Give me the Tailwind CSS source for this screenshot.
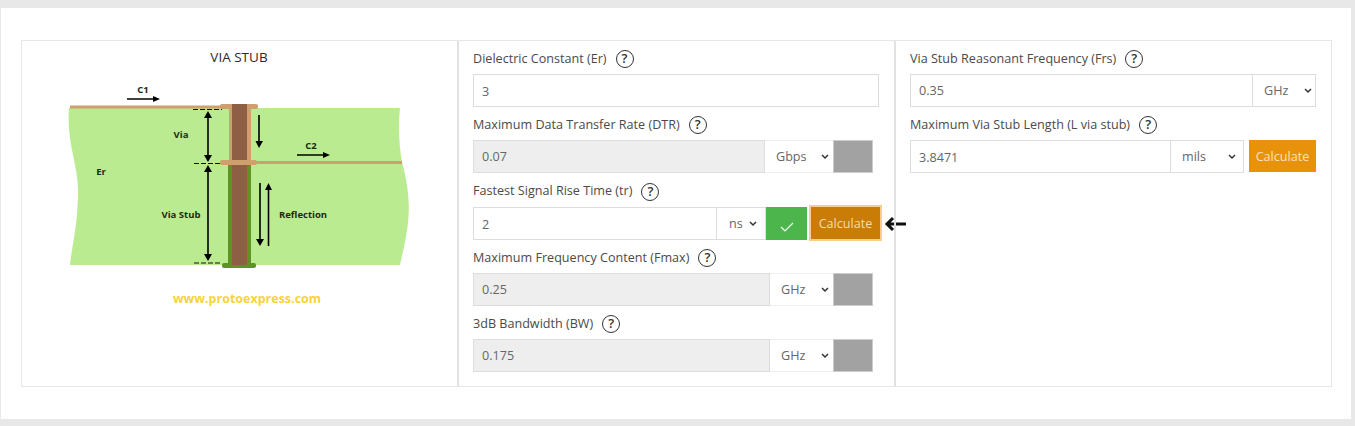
<!DOCTYPE html>
<html lang="en">
	<head>
		<meta charset="UTF-8" />
		<meta name="viewport" content="width=device-width, initial-scale=1.0" />
		<title>Via Stub Calculator</title>
		<script src="https://cdn.jsdelivr.net/npm/@tailwindcss/browser@4"></script>
	</head>
	<body class="bg-[#e8e8e8] h-[426px] overflow-hidden font-['Open_Sans',sans-serif] text-[12.6px] text-[#4a4a4a]">
		<div class="ml-px mr-[4px] mt-2 h-[411px] bg-white pt-8 pl-5">
			<div class="grid grid-cols-[435px_437px_437px] w-[1311px] h-[347px] border border-[#e6e6e6]">
				<!-- diagram -->
				<div>
					<svg class="block" width="435" height="345" viewBox="22 41 435 345" font-family="Open Sans, sans-serif">
						<text x="239" y="62" text-anchor="middle" font-size="13.5" fill="#2a2a2a">VIA STUB</text>
						<path d="M69 108H400C398 125 399 145 402 162C408 185 411 205 407 230C405 245 402 255 400 265H70C72 245 78 225 78 190C78 165 66 140 69 108Z" fill="#bbeb91" />
						<rect x="70" y="105.5" width="155" height="3" fill="#cf9f6e" />
						<rect x="228" y="163" width="23" height="102" fill="#5f9323" />
						<rect x="222" y="263" width="34" height="5" rx="2" fill="#5f9323" />
						<rect x="229" y="104" width="22" height="60" fill="#cf9f6e" />
						<rect x="220" y="104" width="38" height="5" rx="2" fill="#cf9f6e" />
						<rect x="232" y="104" width="15" height="161" fill="#8e5f45" />
						<rect x="220" y="160" width="37" height="5" rx="2" fill="#cf9f6e" />
						<rect x="250" y="161" width="152" height="3" fill="#cf9f6e" />
						<g stroke="#111" stroke-width="1" stroke-dasharray="5 2" fill="none">
							<path d="M193 109.5H222M194 163.5H222M194 263H222" />
						</g>
						<g stroke="#000" stroke-width="1.6" fill="none">
							<path d="M208 116V157M208 171V256M259 115V142M260 183V240M268.5 189V246M127 99H154M297 155H324" />
						</g>
						<g fill="#000">
							<path d="M204 118L208 111L212 118ZM204 155L208 162L212 155ZM204 172L208 165L212 172ZM204 254L208 261L212 254ZM255.5 141L259 148L263 141ZM256 239L260 246L264 239ZM265 190L268.5 183L272 190ZM153 96L160 99L153 102ZM323 152L330 155L323 158Z" />
						</g>
						<g font-size="9.5" font-weight="700" fill="#1c2b10" text-anchor="middle">
							<text x="143" y="93">C1</text>
							<text x="311" y="149">C2</text>
							<text x="181" y="138">Via</text>
							<text x="101" y="175">Er</text>
							<text x="181" y="218">Via Stub</text>
							<text x="303" y="218">Reflection</text>
						</g>
						<text x="247" y="303" text-anchor="middle" font-size="12.5" font-weight="700" fill="#f8d33a">www.protoexpress.com</text>
					</svg>
				</div>

				<!-- inputs -->
				<div class="border-l-2 border-[#e2e2e2] pl-[14px]">
					<div class="flex items-center gap-[9px] h-[33px] pt-[3px]">
						<span>Dielectric Constant (Er)</span>
						<span class="flex items-center justify-center size-[18px] rounded-full border-[1.5px] border-[#333] text-[13px] font-semibold text-[#333]">?</span>
					</div>
					<input class="block w-[406px] h-[33px] border border-[#ddd] px-2 pt-px text-[#666] outline-none" value="3" />

					<div class="flex items-center gap-[9px] h-[33px] pt-[3px]">
						<span>Maximum Data Transfer Rate (DTR)</span>
						<span class="flex items-center justify-center size-[18px] rounded-full border-[1.5px] border-[#333] text-[13px] font-semibold text-[#333]">?</span>
					</div>
					<div class="flex h-[33px] w-[400px]">
						<input class="w-[292px] border border-[#ddd] bg-[#eeeeee] px-2 pt-px text-[#666] outline-none" value="0.07" disabled />
						<div class="relative w-[68px]">
							<select class="appearance-none w-full h-full bg-white border-y border-[#eee] pl-[11px] pt-0.5 text-[#666]"><option>Gbps</option></select>
							<svg class="absolute right-[4px] top-[14px]" width="8" height="6" viewBox="0 0 8 6" fill="none" stroke="#333" stroke-width="1.5"><path d="M1 1L4 4L7 1" /></svg>
						</div>
						<span class="w-10 bg-[#a2a2a2] border border-[#ccc]"></span>
					</div>

					<div class="flex items-center gap-[9px] h-[34px] pt-[3px]">
						<span>Fastest Signal Rise Time (tr)</span>
						<span class="flex items-center justify-center size-[18px] rounded-full border-[1.5px] border-[#333] text-[13px] font-semibold text-[#333]">?</span>
					</div>
					<div class="flex items-center h-[33px] w-[440px]">
						<input class="w-[244px] h-[33px] border border-[#ddd] px-2 pt-px text-[#666] outline-none" value="2" />
						<div class="relative w-[49px] h-[33px]">
							<select class="appearance-none w-full h-full bg-white border-y border-r border-[#ddd] pl-3 pt-0.5 text-[#666]"><option>ns</option></select>
							<svg class="absolute right-[9px] top-[14px]" width="8" height="6" viewBox="0 0 8 6" fill="none" stroke="#333" stroke-width="1.5"><path d="M1 1L4 4L7 1" /></svg>
						</div>
						<span class="flex items-center justify-center w-[41px] h-[33px] bg-[#4cb64c]">
							<svg width="14" height="10" viewBox="0 0 14 10" fill="none" stroke="#fff" stroke-width="1.2" class="mt-1.5"><path d="M1 5L5 9L13 1" /></svg>
						</span>
						<button class="ml-1 -mt-[2px] w-[69px] h-[32px] pt-[3px] bg-[#c97c06] text-[#f6dca8] ring-2 ring-[#f5cf8d]">Calculate</button>
						<svg class="ml-1" width="22" height="16" viewBox="0 0 22 16" fill="none" stroke="#111" stroke-width="3"><path d="M22 8H3M9 2L3 8L9 14" /></svg>
					</div>

					<div class="flex items-center gap-[9px] h-[33px] pt-[3px]">
						<span>Maximum Frequency Content (Fmax)</span>
						<span class="flex items-center justify-center size-[18px] rounded-full border-[1.5px] border-[#333] text-[13px] font-semibold text-[#333]">?</span>
					</div>
					<div class="flex h-[33px] w-[400px]">
						<input class="w-[297px] border border-[#ddd] bg-[#eeeeee] px-2 pt-px text-[#666] outline-none" value="0.25" disabled />
						<div class="relative w-[63px]">
							<select class="appearance-none w-full h-full bg-white border-y border-[#eee] pl-[11px] pt-0.5 text-[#666]"><option>GHz</option></select>
							<svg class="absolute right-[4px] top-[14px]" width="8" height="6" viewBox="0 0 8 6" fill="none" stroke="#333" stroke-width="1.5"><path d="M1 1L4 4L7 1" /></svg>
						</div>
						<span class="w-10 bg-[#a2a2a2] border border-[#ccc]"></span>
					</div>

					<div class="flex items-center gap-[9px] h-[33px] pt-[3px]">
						<span>3dB Bandwidth (BW)</span>
						<span class="flex items-center justify-center size-[18px] rounded-full border-[1.5px] border-[#333] text-[13px] font-semibold text-[#333]">?</span>
					</div>
					<div class="flex h-[33px] w-[400px]">
						<input class="w-[297px] border border-[#ddd] bg-[#eeeeee] px-2 pt-px text-[#666] outline-none" value="0.175" disabled />
						<div class="relative w-[63px]">
							<select class="appearance-none w-full h-full bg-white border-y border-[#eee] pl-[11px] pt-0.5 text-[#666]"><option>GHz</option></select>
							<svg class="absolute right-[4px] top-[14px]" width="8" height="6" viewBox="0 0 8 6" fill="none" stroke="#333" stroke-width="1.5"><path d="M1 1L4 4L7 1" /></svg>
						</div>
						<span class="w-10 bg-[#a2a2a2] border border-[#ccc]"></span>
					</div>
				</div>

				<!-- results -->
				<div class="border-l-2 border-[#e2e2e2] pl-[14px]">
					<div class="flex items-center gap-[9px] h-[33px] pt-[3px]">
						<span>Via Stub Reasonant Frequency (Frs)</span>
						<span class="flex items-center justify-center size-[18px] rounded-full border-[1.5px] border-[#333] text-[13px] font-semibold text-[#333]">?</span>
					</div>
					<div class="flex h-[33px] w-[406px]">
						<input class="w-[343px] border border-[#ddd] px-2 pt-px text-[#666] outline-none" value="0.35" />
						<div class="relative w-[63px]">
							<select class="appearance-none w-full h-full bg-white border-y border-r border-[#ddd] pl-[11px] pt-0.5 text-[#666]"><option>GHz</option></select>
							<svg class="absolute right-[4px] top-[14px]" width="8" height="6" viewBox="0 0 8 6" fill="none" stroke="#333" stroke-width="1.5"><path d="M1 1L4 4L7 1" /></svg>
						</div>
					</div>
					<div class="flex items-center gap-[9px] h-[33px] pt-[3px]">
						<span>Maximum Via Stub Length (L via stub)</span>
						<span class="flex items-center justify-center size-[18px] rounded-full border-[1.5px] border-[#333] text-[13px] font-semibold text-[#333]">?</span>
					</div>
					<div class="flex w-[406px]">
						<input class="w-[261px] h-[33px] border border-[#ddd] px-2 pt-px text-[#666] outline-none" value="3.8471" />
						<div class="relative w-[73px] h-[33px]">
							<select class="appearance-none w-full h-full bg-white border-y border-r border-[#ddd] pl-[11px] pt-0.5 text-[#666]"><option>mils</option></select>
							<svg class="absolute right-[8px] top-[14px]" width="8" height="6" viewBox="0 0 8 6" fill="none" stroke="#333" stroke-width="1.5"><path d="M1 1L4 4L7 1" /></svg>
						</div>
						<button class="ml-[5px] w-[67px] h-[32px] pt-[3px] bg-[#e8920c] text-[#fbe3b4]">Calculate</button>
					</div>
				</div>
			</div>
		</div>
	</body>
</html>
